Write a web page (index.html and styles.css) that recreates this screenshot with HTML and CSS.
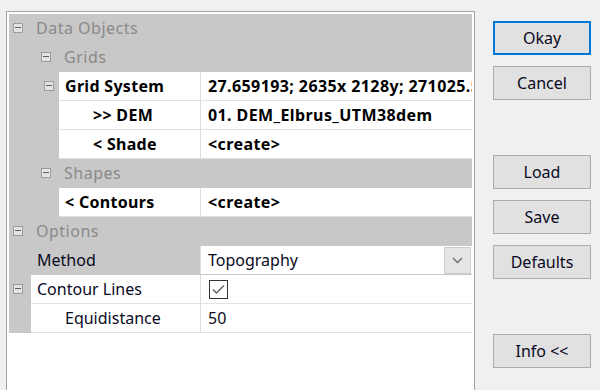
FILE: index.html
```html
<!DOCTYPE html>
<html lang="en">
<head>
    <meta charset="UTF-8">
    <title>Contour Lines and Shading</title>
    <link rel="stylesheet" href="styles.css">
</head>
<body>

<div class="dialog">
    <!-- Property grid -->
    <div class="panel">
        <div class="row head">
            <div class="gutter g0"><span class="tog"></span></div>
            <div class="title">Data Objects</div>
        </div>
        <div class="row head">
            <div class="gutter g1"><span class="tog"></span></div>
            <div class="title">Grids</div>
        </div>
        <div class="row">
            <div class="gutter w50"><span class="tog t2"></span></div>
            <div class="name bold">Grid System</div>
            <div class="value bold">27.659193; 2635x 2128y; 271025.573474x 4777813.588037y</div>
        </div>
        <div class="row">
            <div class="gutter w50"></div>
            <div class="name bold in2">&gt;&gt; DEM</div>
            <div class="value bold">01. DEM_Elbrus_UTM38dem</div>
        </div>
        <div class="row">
            <div class="gutter w50"></div>
            <div class="name bold in2">&lt; Shade</div>
            <div class="value bold">&lt;create&gt;</div>
        </div>
        <div class="row head">
            <div class="gutter g1"><span class="tog"></span></div>
            <div class="title">Shapes</div>
        </div>
        <div class="row">
            <div class="gutter w50"></div>
            <div class="name bold">&lt; Contours</div>
            <div class="value bold">&lt;create&gt;</div>
        </div>
        <div class="row head">
            <div class="gutter g0"><span class="tog"></span></div>
            <div class="title">Options</div>
        </div>
        <div class="row">
            <div class="gutter w22"></div>
            <div class="name grey">Method</div>
            <div class="value combo">
                <span class="combo-text">Topography</span>
                <span class="combo-btn">
                    <svg width="11" height="7" viewBox="0 0 11 7"><polyline points="1,1 5.5,5.5 10,1" fill="none" stroke="#6d6d6d" stroke-width="1.3"/></svg>
                </span>
            </div>
        </div>
        <div class="row">
            <div class="gutter w22"><span class="tog"></span></div>
            <div class="name">Contour Lines</div>
            <div class="value">
                <span class="check">
                    <svg width="17" height="17" viewBox="0 0 17 17"><polyline points="3,8.5 6.5,12 14,4.5" fill="none" stroke="#666" stroke-width="1.5"/></svg>
                </span>
            </div>
        </div>
        <div class="row">
            <div class="gutter w22"></div>
            <div class="name in2">Equidistance</div>
            <div class="value">50</div>
        </div>
    </div>

    <!-- Buttons -->
    <div class="buttons">
        <button class="btn default">Okay</button>
        <button class="btn">Cancel</button>
        <button class="btn gap">Load</button>
        <button class="btn">Save</button>
        <button class="btn">Defaults</button>
        <button class="btn gap">Info &lt;&lt;</button>
    </div>
</div>

</body>
</html>
```

FILE: styles.css
```css
body {
    margin: 0;
    background-color: #f0f0f0;
    font-family: "Noto Sans", "Open Sans", sans-serif;
    font-size: 16px;
    color: #0a0a1e;
    overflow: hidden;
}
.dialog {
    display: flex;
    height: 390px;
    overflow: hidden;
}
.panel {
    width: 463px;
    height: 380px;
    margin: 11px 0 0 6px;
    padding: 2px;
    border: 1px solid #a3a3a3;
    border-bottom: none;
    background-color: #ffffff;
}
.row {
    display: flex;
    height: 29px;
    background-color: #c8c8c8;
}
.head .title {
    color: #8a8a8a;
    line-height: 29px;
    letter-spacing: 0.5px;
    white-space: nowrap;
}
.gutter {
    flex: none;
    box-sizing: border-box;
    display: flex;
    align-items: center;
    background-color: #c8c8c8;
}
.g0 {
    width: 27px;
}
.g1 {
    width: 55px;
    padding-left: 28px;
}
.w50 {
    width: 50px;
}
.w22 {
    width: 22px;
}
.tog {
    position: relative;
    display: inline-block;
    width: 8px;
    height: 8px;
    margin-top: -2px;
    border: 1px solid #9c9c9c;
    background-color: #e4e4e4;
}
.tog::after {
    content: "";
    position: absolute;
    left: 1px;
    top: 3px;
    width: 6px;
    height: 1px;
    background-color: #606060;
}
.gutter .tog {
    margin-left: 4px;
}
.gutter .t2 {
    margin-left: 35px;
}
.name {
    flex: none;
    box-sizing: border-box;
    width: 141px;
    padding-left: 6px;
    line-height: 29px;
    background-color: #ffffff;
    border-bottom: 1px solid #e1e1e1;
    white-space: nowrap;
}
.w22 + .name {
    width: 169px;
}
.name.in2 {
    padding-left: 34px;
}
.name.grey {
    background-color: #c8c8c8;
    border-bottom-color: #c8c8c8;
}
.value {
    flex: 1;
    min-width: 0;
    display: flex;
    align-items: center;
    padding-left: 7px;
    background-color: #ffffff;
    border-left: 1px solid #dcdcdc;
    border-bottom: 1px solid #e1e1e1;
    white-space: nowrap;
    overflow: hidden;
}
.bold {
    font-weight: bold;
    color: #000;
    letter-spacing: 0.3px;
}
.value.bold {
    letter-spacing: 0.4px;
}
.combo {
    padding-right: 0;
    border-bottom-color: #c8c8c8;
}
.combo-text {
    flex: 1;
}
.combo-btn {
    display: flex;
    align-items: center;
    justify-content: center;
    width: 25px;
    height: 25px;
    margin-right: 1px;
    border: 1px solid #cccccc;
    background-color: #e5e5e5;
}
.check {
    display: block;
    width: 17px;
    height: 17px;
    margin-left: 1px;
    border: 1px solid #333333;
    background-color: #ffffff;
}
.check svg {
    display: block;
}
.buttons {
    display: flex;
    flex-direction: column;
    margin: 21px 0 0 18px;
}
.btn {
    width: 98px;
    height: 34px;
    margin-bottom: 11px;
    padding: 0;
    font-family: inherit;
    font-size: 16px;
    color: #0a0a1e;
    background-color: #e1e1e1;
    border: 1px solid #adadad;
}
.btn.default {
    border: 2px solid #0078d7;
}
.btn.gap {
    margin-top: 44px;
}
```
